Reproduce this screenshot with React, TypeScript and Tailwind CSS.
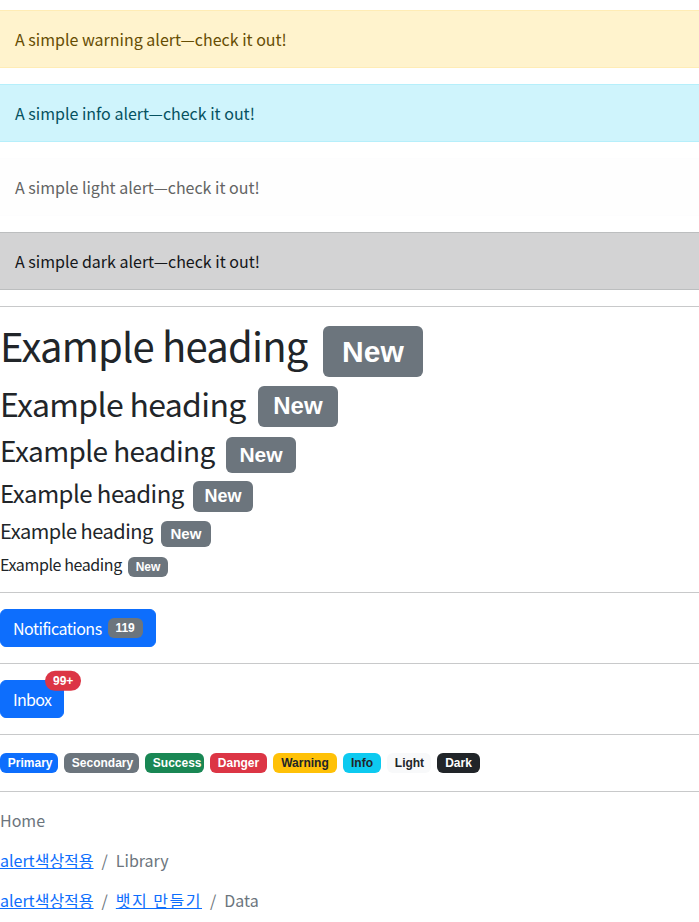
const alerts = [
  { text: 'A simple warning alert—check it out!', cls: 'bg-[#fff3cd] border-[#ffecb5] text-[#664d03]' },
  { text: 'A simple info alert—check it out!', cls: 'bg-[#cff4fc] border-[#b6effb] text-[#055160]' },
  { text: 'A simple light alert—check it out!', cls: 'bg-[#fefefe] border-[#fdfdfe] text-[#636464]' },
  { text: 'A simple dark alert—check it out!', cls: 'bg-[#d3d3d4] border-[#bcbebf] text-[#141619]' },
];

// h1..h6 — row height, badge offset and text tracking tuned per size
const headings = [
  { row: 'h-[53.5px] text-[40px]', text: 'tracking-[-0.8px]', badge: 'mt-[3px] ml-[15px]' },
  { row: 'h-[42.5px] text-[32px]', text: 'tracking-[-0.67px]', badge: 'mt-[1.5px] ml-[12px]' },
  { row: 'h-[36px] text-[28px]', text: 'tracking-[-0.6px]', badge: 'mt-[2px] ml-[11px]' },
  { row: 'h-[33px] text-[24px]', text: 'tracking-[-0.53px]', badge: 'mt-[2px] ml-[9px]' },
  { row: 'h-[27px] text-[20px]', text: 'tracking-[-0.47px]', badge: 'mt-[1px] ml-[8px]' },
  { row: 'h-[21px] text-[16px]', text: 'tracking-[-0.4px]', badge: 'mt-[2px] ml-[6px]' },
];

const pills = [
  { label: 'Primary', cls: 'w-[58px] bg-[#0d6efd] text-white' },
  { label: 'Secondary', cls: 'w-[75px] bg-[#6c757d] text-white' },
  { label: 'Success', cls: 'w-[59px] bg-[#198754] text-white' },
  { label: 'Danger', cls: 'w-[57px] bg-[#dc3545] text-white' },
  { label: 'Warning', cls: 'w-[64px] bg-[#ffc107] text-[#212529]' },
  { label: 'Info', cls: 'w-[38px] bg-[#0dcaf0] text-[#212529]' },
  { label: 'Light', cls: 'w-[44px] bg-[#f8f9fa] text-[#212529]' },
  { label: 'Dark', cls: 'w-[43px] bg-[#212529] text-white' },
];

const badge = "inline-block px-[0.65em] py-[0.35em] text-[0.75em] font-bold leading-none rounded-[6px] font-['Liberation_Sans',Arial,sans-serif]";

function Divider() {
  return <hr className="my-4 border-0 border-t border-[#c8c9ca]" />;
}

function Sep() {
  return <span className="px-2 text-[#6c757d]">/</span>;
}

export default function App() {
  return (
    <div className="min-h-screen overflow-hidden bg-white pt-[10px] text-[16px] leading-6 text-[#212529] font-['Noto_Sans_CJK_KR','Noto_Sans',sans-serif]">
      {/* Alerts */}
      {alerts.map((a, i) => (
        <div key={i} className={`mb-4 border-y px-[15px] py-4 ${a.cls}`}>
          {a.text}
        </div>
      ))}

      <Divider />

      {/* Headings */}
      {headings.map((h, i) => (
        <div key={i} className={`mb-2 flex items-start last:mb-0 ${h.row}`}>
          <span className={`leading-[1.128] ${h.text}`}>Example heading</span>
          <span className={`${badge} shrink-0 bg-[#6c757d] text-white ${h.badge}`}>New</span>
        </div>
      ))}

      <Divider />

      <button className="inline-flex items-center rounded-[6px] border border-[#0d6efd] bg-[#0d6efd] px-3 py-1.5 text-white">
        <span className="tracking-[-0.5px]">Notifications</span>
        <span className={`${badge} ml-[6px] bg-[#6c757d] text-white`}>119</span>
      </button>

      <Divider />

      <button className="relative rounded-[6px] border border-[#0d6efd] bg-[#0d6efd] px-3 py-1.5 tracking-[-0.7px] text-white">
        Inbox
        <span className="absolute left-full top-0 inline-block -translate-x-1/2 -translate-y-1/2 rounded-full bg-[#dc3545] px-[0.65em] py-[0.35em] text-[12px] font-bold leading-none tracking-normal text-white font-['Liberation_Sans',Arial,sans-serif]">
          99+
        </span>
      </button>

      <Divider />

      {/* Badges */}
      <div className="flex h-6 items-center gap-1.5">
        {pills.map((p) => (
          <span key={p.label} className={`${badge} text-center text-[12px] ${p.cls}`}>
            {p.label}
          </span>
        ))}
      </div>

      <Divider />

      {/* Breadcrumbs */}
      <nav className="mb-4 text-[#6c757d]">Home</nav>
      <nav className="mb-4 flex text-[#6c757d]">
        <a href="#" className="text-[#0d6efd] underline">alert색상적용</a>
        <Sep />
        <span>Library</span>
      </nav>
      <nav className="mb-4 flex text-[#6c757d]">
        <a href="#" className="text-[#0d6efd] underline">alert색상적용</a>
        <Sep />
        <a href="#" className="tracking-[1.5px] text-[#0d6efd] underline">뱃지 만들기</a>
        <Sep />
        <span>Data</span>
      </nav>
    </div>
  );
}
